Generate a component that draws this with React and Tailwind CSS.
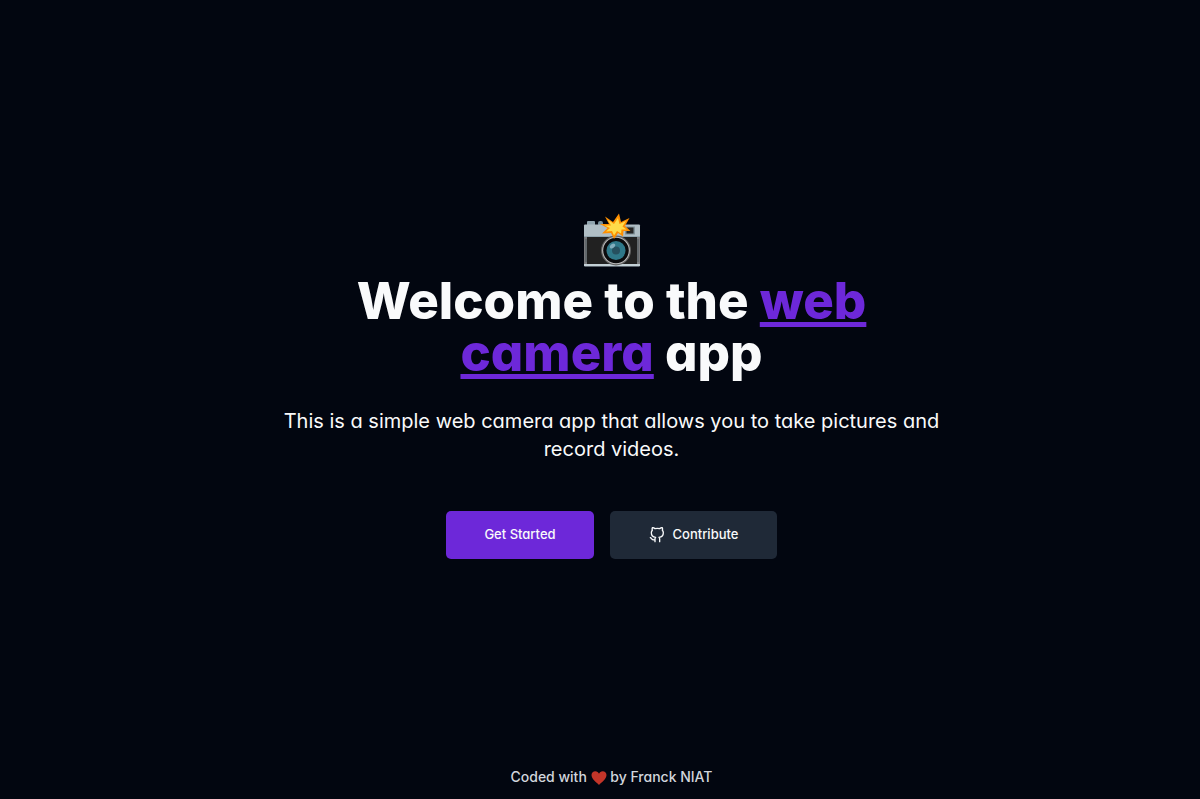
import React from 'react';
import { FiGithub } from 'react-icons/fi';

const CameraFlash = () => (
  <svg viewBox="0 0 58 54" className="w-[58px] h-[54px] mx-auto" role="img" aria-label="Camera with flash">
    <rect x="4" y="8" width="8" height="5" rx="1" fill="#90a4ae" />
    <rect x="15" y="8" width="5" height="5" rx="2" fill="#78909c" />
    <rect x="1" y="11.500" width="56" height="42" rx="1" fill="#b0bec5" />
    <rect x="1" y="24" width="56" height="27" fill="#78797c" />
    <rect x="4" y="24" width="50" height="27" fill="#212121" />
    <rect x="2" y="26" width="2" height="23" fill="#62686c" />
    <rect x="54" y="26" width="2" height="23" fill="#62686c" />
    <rect x="1" y="23" width="56" height="1" fill="#90a4ae" />
    <rect x="1" y="51" width="56" height="2" fill="#c3d0d6" />
    <rect x="42" y="13.500" width="10" height="8" fill="#82939b" />
    <rect x="43.500" y="14.500" width="7" height="6" fill="#252525" />
    <circle cx="33" cy="37.500" r="15" fill="#616161" />
    <circle cx="33" cy="37.500" r="13.800" fill="#bdbdbd" />
    <circle cx="33" cy="37.500" r="12.800" fill="#0b0b0d" />
    <circle cx="33" cy="37.500" r="9.500" fill="#2f7889" />
    <circle cx="33" cy="37.500" r="4" fill="#26505f" />
    <ellipse cx="29.500" cy="33" rx="3" ry="2" fill="#82aebd" transform="rotate(-40 29.5 33)" />
    <path
      d="M22 3.500L30 9 36 .5 38 9 46.500 5 42 13 47.500 18 40.500 18 40 23.500 35 20 31 26 28 20 19 20.500 24.500 15 17 11 26 11z"
      fill="#ff8f00"
    />
    <path
      d="M24.500 6.500L31 11 35 5 36.500 11 43 8 39.500 13.500 43.500 16.500 38.500 16.500 38 20.500 34 18 31 22.500 29 18 23 18.500 27 15 21.500 12.500 28 12.500z"
      fill="#ffdc4a"
    />
  </svg>
);

const Heart = () => (
  <svg viewBox="0 0 16 15" className="inline-block w-4 h-4" role="img" aria-label="love">
    <path
      d="M8 14.5C6 12 .5 9 .5 4.500.5 2 2.300.7 4.300.7 6 .7 7.400 1.800 8 3.200 8.600 1.800 10 .7 11.700.7c2 0 3.800 1.300 3.800 3.800C15.500 9 10 12 8 14.500z"
      fill="#c33529"
    />
  </svg>
);

const App = () => {
  return (
    <div className="flex min-h-screen flex-col bg-[#020610] pl-[23px] text-[#f9fafb] font-['Inter',sans-serif] [font-feature-settings:'cv11']">
      <main className="flex flex-1 flex-col items-center justify-center pt-1 text-center">
        <h1 className="max-w-[600px] text-[51px] leading-[52px] font-extrabold">
          <CameraFlash />
          <span className="mt-2 block">
            Welcome to the <span className="text-[#6d28d9] underline">web camera</span> app
          </span>
        </h1>
        <p className="mt-7 max-w-[680px] text-xl leading-7">
          This is a simple web camera app that allows you to take pictures and record videos.
        </p>
        <div className="mt-12 flex gap-4">
          <button className="h-12 w-[148px] rounded-[5px] bg-[#6d28d9] text-[13px] font-medium">
            Get Started
          </button>
          <button className="flex h-12 w-[167px] items-center justify-center gap-2 rounded-[5px] bg-[#1f2937] text-[13px] font-medium">
            <FiGithub size={16} />
            Contribute
          </button>
        </div>
      </main>
      <footer className="pb-3 text-center text-sm font-medium text-gray-300">
        Coded with <Heart /> by Franck NIAT
      </footer>
    </div>
  );
};

export default App;
